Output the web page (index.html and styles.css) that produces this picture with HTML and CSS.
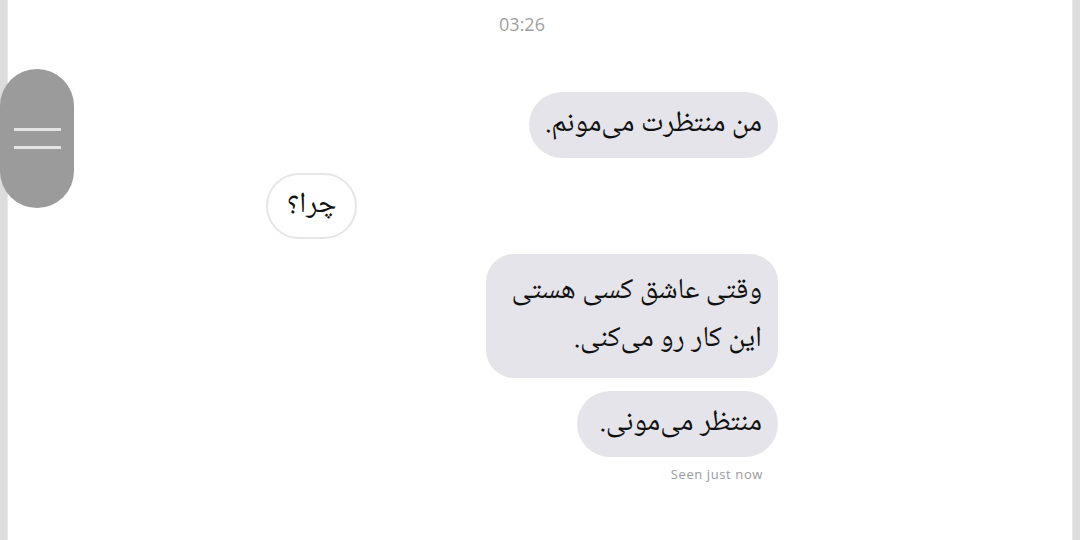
FILE: index.html
```html
<!DOCTYPE html>
<html lang="fa">
<head>
    <meta charset="utf-8">
    <title>Chat</title>
    <link rel="stylesheet" href="styles.css">
</head>
<body>
    <div class="edge edge-left"></div>
    <main class="chat">
        <div class="thread">
            <div class="time">03:26</div>
            <div class="row row-sent">
                <div class="bubble sent" dir="rtl">من منتظرت می‌مونم.</div>
            </div>
            <div class="row row-received">
                <div class="bubble received" dir="rtl">چرا؟</div>
            </div>
            <div class="row row-sent">
                <div class="bubble sent multi" dir="rtl">وقتی عاشق کسی هستی<br>این کار رو می‌کنی.</div>
            </div>
            <div class="row row-sent last">
                <div class="bubble sent wide" dir="rtl">منتظر می‌مونی.</div>
            </div>
            <div class="seen">Seen just now</div>
        </div>
    </main>
    <div class="edge edge-right"></div>

    <div class="handle">
        <span class="handle-line"></span>
        <span class="handle-line"></span>
    </div>
</body>
</html>
```

FILE: styles.css
```css
body {
    margin: 0;
    padding: 0;
    height: 540px;
    display: flex;
    background-color: #ffffff;
    font-family: "Open Sans", "Noto Sans", sans-serif;
    overflow: hidden;
}

.edge {
    width: 7px;
    background-color: #dcdcdc;
    border-right: 1px solid #e8e8e8;
}

.edge-right {
    width: 7px;
    border-right: none;
    border-left: 1px solid #e8e8e8;
}

.chat {
    flex: 1;
    padding-left: 258px;
}

.thread {
    width: 512px;
    display: flex;
    flex-direction: column;
}

.time {
    text-align: center;
    color: #9f9f9f;
    font-size: 18px;
    line-height: 24px;
    padding-top: 12px;
    margin-bottom: 56px;
}

.row {
    display: flex;
    margin-bottom: 15px;
}

.row-sent {
    justify-content: flex-end;
}

.row-received {
    justify-content: flex-start;
}

.row.last {
    margin-bottom: 8px;
}

.bubble {
    font-family: "Noto Naskh Arabic", "Noto Sans Arabic", "DejaVu Sans", sans-serif;
    font-size: 29px;
    line-height: 48px;
    color: #111111;
    padding: 9px 16px;
    border-radius: 33px;
}

.sent {
    background-color: #e4e4ea;
}

.received {
    background-color: #ffffff;
    border: 2px solid #e6e6e6;
    padding: 7px 19px;
}

.multi {
    padding: 14px 16px 14px 25px;
    border-radius: 28px;
}

.wide {
    padding-left: 23px;
}

.row-sent + .row-sent {
    margin-top: -2px;
}

.seen {
    text-align: right;
    padding-right: 15px;
    font-size: 13px;
    letter-spacing: 0.6px;
    color: #9a9a9a;
}

.handle {
    position: absolute;
    left: 0;
    top: 69px;
    width: 74px;
    height: 139px;
    border-radius: 37px;
    background-color: #9b9b9b;
    display: flex;
    flex-direction: column;
    align-items: center;
    justify-content: center;
    gap: 15px;
}

.handle-line {
    width: 47px;
    height: 3px;
    background-color: #e4e4e4;
}
```
